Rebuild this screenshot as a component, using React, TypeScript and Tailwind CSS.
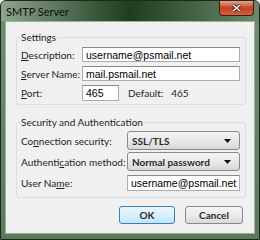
import React from "react";

const seg = { fontFamily: "Lato, \"Liberation Sans\", sans-serif" };
const arial = { fontFamily: "\"Liberation Sans\", Arial, sans-serif" };

function Field({ value, className }: { value: string; className: string }) {
  return (
    <div
      className={`bg-white border border-[#abadb3] border-t-[#8a8a8a] flex items-center pl-[3px] text-[10.5px] text-black whitespace-nowrap ${className}`}
      style={arial}
    >
      {value}
    </div>
  );
}

function Select({ value }: { value: string }) {
  return (
    <div className="h-[19px] w-[113px] rounded-[3px] border border-[#8a8a8a] bg-gradient-to-b from-[#f4f4f4] via-[#e9e9e9] to-[#d8d8d8] flex items-center justify-between pl-[4px] pr-[8px] text-[10px] font-bold text-[#2a2a2a]">
      <span>{value}</span>
      <svg width="7" height="4" viewBox="0 0 7 4">
        <path d="M0 0h7L3.5 4z" fill="#111" />
      </svg>
    </div>
  );
}

function Label({ children }: { children: React.ReactNode }) {
  return <span className="text-[10px] leading-[12px] text-[#1e1e1e] whitespace-nowrap">{children}</span>;
}

export default function App() {
  return (
    <div className="w-[260px] h-[240px] bg-[#f0f0f0] text-[10px] leading-[12px]" style={seg}>
      <div className="w-[260px] h-[240px] border border-[#1b2a1b] bg-gradient-to-b from-[#6f8f6f] to-[#5a7a5a] flex flex-col rounded-t-[6px]">
        {/* title bar */}
        <div className="h-[20px] flex items-start justify-between bg-gradient-to-r from-[#8fa68f] via-[#1f3d1f] to-[#6d8a6d] rounded-t-[5px]">
          <span className="pl-[5px] pt-[4px] text-[11px] leading-[13px] text-[#101010] whitespace-nowrap">SMTP Server</span>
          <div className="mr-[5px] w-[35px] h-[15px] rounded-b-[4px] border border-[#4a1508] border-t-0 bg-gradient-to-b from-[#e6a28d] via-[#c2411f] to-[#d5603a] flex items-center justify-center">
            <svg width="9" height="8" viewBox="0 0 9 8">
              <path d="M1 1l7 6M8 1L1 7" stroke="#3a1a12" strokeWidth="3" />
              <path d="M1 1l7 6M8 1L1 7" stroke="#fff" strokeWidth="1.6" />
            </svg>
          </div>
        </div>
        {/* client area */}
        <div className="mx-[4px] mb-[5px] flex-1 border border-[#9db09d] bg-[#f0f0f0] flex flex-col pl-[10px] pr-[8px]">
          <div className="mt-[15px] h-[68px] border border-[#d5dfe5] rounded-[3px] pl-[4px] pr-[5px] relative">
            <div className="absolute -top-[7px] left-[3px] px-[1px] bg-[#f0f0f0] text-[#1e1e1e]">Settings</div>
            <div className="flex flex-col gap-[4px] pt-[9px]">
              <div className="flex items-center">
                <div className="w-[61px]"><Label><u>D</u>escription:</Label></div>
                <Field value="username@psmail.net" className="w-[158px] h-[15px]" />
              </div>
              <div className="flex items-center">
                <div className="w-[61px]"><Label><u>S</u>erver Name:</Label></div>
                <Field value="mail.psmail.net" className="w-[158px] h-[15px]" />
              </div>
              <div className="flex items-center">
                <div className="w-[61px]"><Label><u>P</u>ort:</Label></div>
                <Field value="465" className="w-[37px] h-[16px]" />
                <span className="ml-[9px]"><Label>Default:</Label></span>
                <span className="ml-[8px]"><Label>465</Label></span>
              </div>
            </div>
          </div>
          <div className="mt-[17px] h-[76px] border border-[#d5dfe5] rounded-[3px] pl-[4px] pr-[5px] relative">
            <div className="absolute -top-[7px] left-[3px] px-[1px] bg-[#f0f0f0] text-[#1e1e1e] whitespace-nowrap">Security and Authentication</div>
            <div className="flex flex-col pt-[8px]">
              <div className="flex items-center justify-between">
                <Label>Co<u>n</u>nection security:</Label>
                <Select value="SSL/TLS" />
              </div>
              <div className="flex items-center justify-between mt-[2px]">
                <Label>Authenti<u>c</u>ation method:</Label>
                <Select value="Normal password" />
              </div>
              <div className="flex items-center justify-between mt-[4px]">
                <Label>User Na<u>m</u>e:</Label>
                <Field value="username@psmail.net" className="w-[113px] h-[16px]" />
              </div>
            </div>
          </div>
          <div className="flex justify-end gap-[10px] mt-[8px] pr-[3px]">
            <div className="w-[56px] h-[18px] rounded-[3px] border border-[#3c7fb1] bg-gradient-to-b from-[#eaf6fd] via-[#d9f0fc] to-[#bee6fd] flex items-center justify-center font-bold text-[#2a2a2a]">OK</div>
            <div className="w-[58px] h-[18px] rounded-[3px] border border-[#8a8a8a] bg-gradient-to-b from-[#f4f4f4] via-[#ebebeb] to-[#d9d9d9] flex items-center justify-center font-bold text-[#2a2a2a]">Cancel</div>
          </div>
        </div>
      </div>
    </div>
  );
}
